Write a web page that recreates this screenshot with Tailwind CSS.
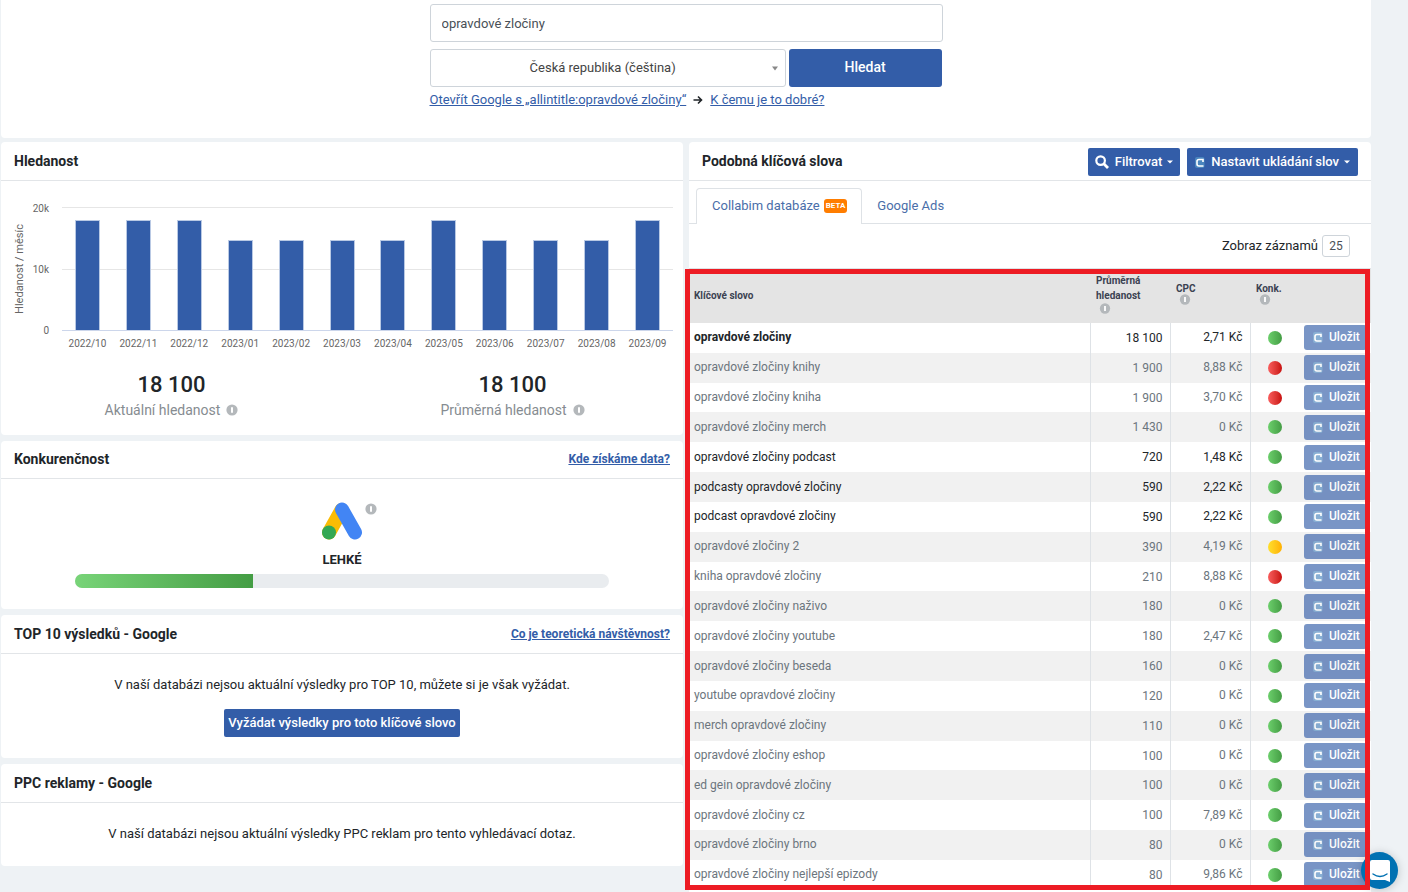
<!DOCTYPE html>
<html lang="cs">
<head>
<meta charset="utf-8">
<title>Hledanost klíčových slov</title>
<script src="https://cdn.jsdelivr.net/npm/@tailwindcss/browser@4"></script>
</head>
<body class="bg-[#eef2f5] font-['Roboto',sans-serif] text-[13px] leading-5 text-[#212529] h-screen overflow-hidden">
<svg class="hidden" aria-hidden="true">
  <symbol id="info" viewBox="0 0 12 12"><circle cx="6" cy="6" r="5.6" fill="#b4b8bb"/><path d="M5 3.200h2v5.600H5z" fill="#fff"/></symbol>
  <symbol id="mark" viewBox="0 0 10 12"><rect x="0" y="1" width="9.500" height="11" rx="2" fill="#5aa0cd" opacity=".6"/><path d="M8 6V3.500H4Q2 3.500 2 5.500V8Q2 10 4 10H8.500" fill="none" stroke="#fff" stroke-width="1.600"/></symbol>
  <symbol id="caret" viewBox="0 0 6 4"><path d="M0 0.500h6l-3 3z" fill="currentColor"/></symbol>
</svg>

<main class="ml-px mr-[37px]">
  <section class="bg-white rounded-b h-[138px] pt-1">
    <form class="mx-auto w-[513px]" onsubmit="return false">
      <input type="text" aria-label="Klíčové slovo" value="opravdové zločiny" class="block w-full h-[38px] border border-[#ced4da] rounded-[3px] px-[11px] bg-white text-[#495057]">
      <div class="mt-[7px] mr-px flex gap-[3px]">
        <div class="relative flex-[7]">
          <select aria-label="Země" class="appearance-none block w-full h-[38px] border border-[#ced4da] rounded-[3px] pl-[10px] pr-5 text-center bg-white text-[#444]"><option>Česká republika (čeština)</option></select>
          <svg class="absolute right-2 top-[17px] w-[6px] h-[5px] text-[#888] pointer-events-none" viewBox="0 0 6 5"><path d="M0 0.500h6L3 4.500z" fill="currentColor"/></svg>
        </div>
        <button class="flex-[3] h-[38px] rounded-[3px] bg-[#335da8] text-white text-[14px] font-medium pb-[2px]">Hledat</button>
      </div>
      <p class="mt-[3px] flex items-center">
        <a href="#" class="text-[#335da8] underline">Otevřít Google s „allintitle:opravdové zločiny“</a>
        <svg class="mx-[7px] w-[10px] h-[10px]" viewBox="0 0 10 10" fill="none" stroke="#212529" stroke-width="1.600"><path d="M0.500 5h8M5 1.500L8.500 5 5 8.500"/></svg>
        <a href="#" class="text-[#335da8] underline">K čemu je to dobré?</a>
      </p>
    </form>
  </section>

  <div class="mt-1 grid grid-cols-2 gap-[6px] items-start">
    <div class="flex flex-col gap-[6px]">
      <section class="bg-white rounded">
        <h2 class="h-[39px] border-b border-[#e2e5e8] px-[13px] pb-px flex items-center text-[14px] font-bold">Hledanost</h2>
        <div class="flex pt-[26px] pl-[11px] pr-[10px] text-[#666]">
          <div class="h-[124px] w-[15px] flex items-center justify-center"><span class="-rotate-90 whitespace-nowrap text-[11px]">Hledanost / měsíc</span></div>
          <div class="h-[124px] w-[22px] flex flex-col justify-between items-end text-[10px] leading-[10px]"><span class="-mt-[3px]">20k</span><span>10k</span><span class="-mb-[5px]">0</span></div>
          <div class="ml-[13px] flex-1">
            <div class="relative h-[124px]">
              <div class="absolute inset-0 flex flex-col justify-between">
                <div class="h-px bg-[#e6e6e6]"></div><div class="h-px bg-[#e6e6e6]"></div><div class="h-px bg-[#ccd6eb]"></div>
              </div>
              <div id="bars" class="relative h-full grid grid-cols-12 items-end justify-items-center pb-px"></div>
            </div>
            <div id="months" class="mt-[3px] grid grid-cols-12 text-center text-[10px] whitespace-nowrap"></div>
          </div>
        </div>
        <div class="grid grid-cols-2 pt-[18px] pb-[15px] text-center">
          <div><p class="text-[22px] leading-[26px] font-medium">18 100</p><p class="mt-[2px] leading-5 text-[14px] text-[#868c91] flex justify-center items-center gap-[6px]">Aktuální hledanost <svg class="w-3 h-3"><use href="#info"/></svg></p></div>
          <div><p class="text-[22px] leading-[26px] font-medium">18 100</p><p class="mt-[2px] leading-5 text-[14px] text-[#868c91] flex justify-center items-center gap-[6px]">Průměrná hledanost <svg class="w-3 h-3"><use href="#info"/></svg></p></div>
        </div>
      </section>

      <section class="bg-white rounded">
        <div class="h-[38px] border-b border-[#e2e5e8] px-[13px] pb-px flex items-center justify-between"><h2 class="text-[14px] font-bold">Konkurenčnost</h2><a href="#" class="text-[12px] font-bold text-[#335da8] underline">Kde získáme data?</a></div>
        <div class="pt-[23px] pb-[21px] flex flex-col items-center">
          <div class="relative">
            <svg class="w-[42px] h-[38px]" viewBox="0 0 42 38" fill="none" stroke-linecap="round" stroke-width="14"><path d="M8 30.500L20.500 8" stroke="#fbbc04"/><path d="M21 7.500L34 30.500" stroke="#4285f4"/><circle cx="8" cy="30.500" r="7" fill="#34a853"/></svg>
            <svg class="absolute left-full top-[1px] ml-[2px] w-3 h-3"><use href="#info"/></svg>
          </div>
          <p class="mt-[10px] font-bold">LEHKÉ</p>
          <div role="progressbar" aria-label="Konkurenčnost" aria-valuenow="33" class="mt-1 w-[534px] max-w-full h-[14px] rounded-full overflow-hidden bg-[#e9ecef]"><div class="h-full bg-linear-to-r from-[#78d478] to-[#449d44]" style="width:33.3%"></div></div>
        </div>
      </section>

      <section class="bg-white rounded">
        <div class="h-[39px] border-b border-[#e2e5e8] px-[13px] flex items-center justify-between"><h2 class="text-[14px] font-bold">TOP 10 výsledků - Google</h2><a href="#" class="text-[12px] font-bold text-[#335da8] underline">Co je teoretická návštěvnost?</a></div>
        <div class="pt-[21px] pb-[21px] text-center">
          <p>V naší databázi nejsou aktuální výsledky pro TOP 10, můžete si je však vyžádat.</p>
          <button class="mt-[14px] h-7 px-1 pb-px rounded-[2px] bg-[#335da8] text-white font-medium">Vyžádat výsledky pro toto klíčové slovo</button>
        </div>
      </section>

      <section class="bg-white rounded">
        <h2 class="h-[39px] border-b border-[#e2e5e8] px-[13px] flex items-center text-[14px] font-bold">PPC reklamy - Google</h2>
        <p class="pt-[21px] pb-[22px] text-center">V naší databázi nejsou aktuální výsledky PPC reklam pro tento vyhledávací dotaz.</p>
      </section>
    </div>

    <section class="bg-white rounded">
      <div class="h-[39px] border-b border-[#e2e5e8] px-[13px] pt-px flex items-center gap-[7px]">
        <h2 class="mr-auto pb-[2px] text-[14px] font-bold">Podobná klíčová slova</h2>
        <button class="h-7 px-[7px] rounded-[2px] bg-[#335da8] text-white font-medium flex items-center"><svg class="w-[14px] h-[14px] mr-[6px]" viewBox="0 0 14 14" fill="none" stroke="#fff" stroke-width="2.200"><circle cx="5.600" cy="5.600" r="4.300"/><path d="M8.800 8.800L13 13" stroke-width="2.800"/></svg>Filtrovat<svg class="ml-[5px] w-[6px] h-[4px]"><use href="#caret"/></svg></button>
        <button class="h-7 px-2 rounded-[2px] bg-[#335da8] text-white font-medium flex items-center"><svg class="w-[10px] h-3 mr-[6px]"><use href="#mark"/></svg>Nastavit ukládání slov<svg class="ml-[5px] w-[6px] h-[4px]"><use href="#caret"/></svg></button>
      </div>
      <nav class="mt-[7px] h-9 border-b border-[#dee2e6] pl-[7px] flex text-[#4a6ea9]">
        <a href="#" class="-mb-px h-9 pl-[15px] pr-[14px] pb-px flex items-center border border-b-0 border-[#dee2e6] rounded-t bg-white">Collabim databáze<span class="ml-1 px-[2px] h-[14px] leading-[14px] rounded-[3px] bg-[#ff7d00] text-white text-[8px] font-bold">BETA</span></a>
        <a href="#" class="px-[15px] flex items-center">Google Ads</a>
      </nav>
      <div class="h-11 pr-[21px] flex items-center justify-end gap-1">
        <label for="count">Zobraz záznamů</label>
        <select id="count" class="appearance-none w-7 h-[22px] border border-[#ced4da] rounded-[3px] text-[12px] text-center text-[#495057] bg-white"><option>25</option></select>
      </div>
      <div class="relative border-t border-[#dee2e6]">
        <table class="w-full table-fixed border-collapse text-[12px] h-[621px]">
          <colgroup><col><col class="w-20"><col class="w-20"><col class="w-[50px]"><col class="w-[71px]"></colgroup>
          <thead class="bg-[#e4e4e4] text-[#3b4252] text-[10px] leading-[15px] text-left"><tr class="h-[54px]">
            <th class="pl-[5px] pb-px">Klíčové slovo</th>
            <th class="pl-[6px] align-top pt-1">Průměrná hledanost<svg class="ml-[3px] w-3 h-[11px]"><use href="#info"/></svg></th>
            <th class="pl-[6px] pb-1 leading-[11px]">CPC<svg class="ml-[3px] w-3 h-[11px]"><use href="#info"/></svg></th>
            <th class="pl-[6px] pb-1 leading-[11px]">Konk.<svg class="ml-[3px] w-3 h-[11px]"><use href="#info"/></svg></th>
            <th aria-label="Akce"></th>
          </tr></thead>
          <tbody id="rows"></tbody>
        </table>
        <div class="absolute top-0 -left-1 right-px bottom-0 z-20 border-5 border-[#ed1c24] pointer-events-none"></div>
      </div>
      <div class="h-2"></div>
    </section>
  </div>
</main>

<button aria-label="Otevřít chat" class="fixed z-10 right-[10px] bottom-[3px] w-[37px] h-[37px] rounded-full bg-[#0071b2] shadow-[0_1px_10px_rgba(0,0,0,0.2)] flex items-center justify-center">
  <svg class="w-5 h-[22px]" viewBox="0 0 20 22"><path d="M2 0h16q2 0 2 2v20l-5-2H2q-2 0-2-2V2q0-2 2-2z" fill="#fff"/><path d="M3 14q7 5 14 0" fill="none" stroke="#0071b2" stroke-width="1.400" stroke-linecap="round"/></svg>
</button>

<script>
const series = [['2022/10',18100],['2022/11',18100],['2022/12',18100],['2023/01',14800],['2023/02',14800],['2023/03',14800],['2023/04',14800],['2023/05',18100],['2023/06',14800],['2023/07',14800],['2023/08',14800],['2023/09',18100]];
document.getElementById('bars').innerHTML = series.map(([m, v]) => `<div class="w-[25px] border border-b-0 border-[#b9c9e4] bg-[#335da8]" style="height:${v / 203}%"></div>`).join('');
document.getElementById('months').innerHTML = series.map(([m]) => `<span>${m}</span>`).join('');

const dots = {g: 'from-[#6ccf6c] to-[#449d44]', r: 'from-[#f95c5c] to-[#c80a0a]', y: 'from-[#ffdf2b] to-[#ffb000]'};
const rows = [
  ['opravdové zločiny','18 100','2,71','g','b'],['opravdové zločiny knihy','1 900','8,88','r'],['opravdové zločiny kniha','1 900','3,70','r'],
  ['opravdové zločiny merch','1 430','0','g'],['opravdové zločiny podcast','720','1,48','g','d'],['podcasty opravdové zločiny','590','2,22','g','d'],
  ['podcast opravdové zločiny','590','2,22','g','d'],['opravdové zločiny 2','390','4,19','y'],['kniha opravdové zločiny','210','8,88','r'],
  ['opravdové zločiny naživo','180','0','g'],['opravdové zločiny youtube','180','2,47','g'],['opravdové zločiny beseda','160','0','g'],
  ['youtube opravdové zločiny','120','0','g'],['merch opravdové zločiny','110','0','g'],['opravdové zločiny eshop','100','0','g'],
  ['ed gein opravdové zločiny','100','0','g'],['opravdové zločiny cz','100','7,89','g'],['opravdové zločiny brno','80','0','g'],['opravdové zločiny nejlepší epizody','80','9,86','g']
];
document.getElementById('rows').innerHTML = rows.map(([k, n, c, d, s]) => `
<tr class="even:bg-[#f1f1f1] leading-4 ${s ? 'text-[#212529]' : 'text-[#6c757d]'}">
  <td class="pl-[5px] pb-px ${s === 'b' ? 'font-bold' : ''}">${k}</td>
  <td class="border-l border-[#dee2e6] pr-[7px] text-right">${n}</td>
  <td class="border-x border-[#dee2e6] pr-[7px] pb-px text-right">${c} Kč</td>
  <td><span class="block mx-auto w-[14px] h-[14px] rounded-full bg-linear-to-r ${dots[d]}"></span></td>
  <td class="pl-1"><button class="w-[63px] h-[25px] pl-[9px] pb-px rounded-[3px] bg-[#335da8] opacity-65 text-white font-medium flex items-center"><svg class="w-[10px] h-3 mr-[6px]"><use href="#mark"/></svg>Uložit</button></td>
</tr>`).join('');
</script>
</body>
</html>
